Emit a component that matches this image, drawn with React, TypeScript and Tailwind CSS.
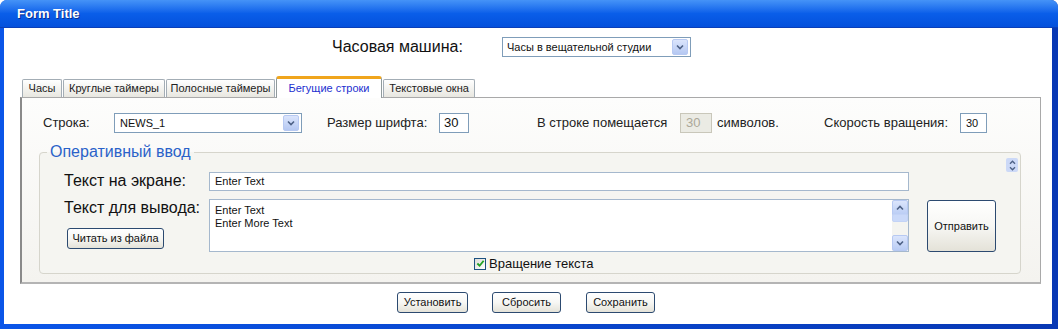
import React from 'react';

const Chevron: React.FC<{ up?: boolean; className?: string }> = ({ up, className }) => (
  <svg viewBox="0 0 8 6" className={className} fill="none">
    <path d={up ? 'M1 4.5 L4 1.5 L7 4.5' : 'M1 1.5 L4 4.5 L7 1.5'} stroke="#4d6185" strokeWidth="1.6" />
  </svg>
);

const DropButton: React.FC = () => (
  <div className="w-[16px] h-[16px] rounded-[2px] border border-[#b7c9f2] bg-gradient-to-b from-[#dbe5fc] to-[#b5c8f2] flex items-center justify-center">
    <Chevron className="w-[8px] h-[6px]" />
  </div>
);

const XpButton: React.FC<{ label: string; className?: string }> = ({ label, className }) => (
  <div
    className={`border border-[#2c4a70] rounded-[3px] bg-gradient-to-b from-white via-[#f7f7f4] to-[#e4e2d8] text-[11px] text-[#111] flex items-center justify-center ${className ?? ''}`}
  >
    {label}
  </div>
);

const tabs = [
  { label: 'Часы', w: 'w-[40px]' },
  { label: 'Круглые таймеры', w: 'w-[102px]' },
  { label: 'Полосные таймеры', w: 'w-[109px]' },
  { label: 'Бегущие строки', w: 'w-[106px]', active: true },
  { label: 'Текстовые окна', w: 'w-[92px]' },
];

export default function App() {
  return (
    <div className="w-[1058px] h-[329px] flex flex-col rounded-t-[7px] bg-gradient-to-r from-[#0a55e8] to-[#0838b4] font-['Liberation_Sans',Arial,sans-serif]">
      {/* Title bar */}
      <div className="h-[28px] shrink-0 rounded-t-[7px] bg-gradient-to-b from-[#4593f7] via-[#0a5ee9] to-[#0450dc] border-b border-[#0a3fb8] flex items-center px-[17px]">
        <span className="text-white font-bold text-[13px] [text-shadow:1px_1px_0_#0a2f90]">Form Title</span>
      </div>

      <div className="flex-1 ml-[4px] mr-[6px] mb-[5px] bg-white flex flex-col">
        {/* Clock machine row */}
        <div className="flex items-center pl-[328px] mt-[9px] h-[20px]">
          <span className="w-[170px] text-[16px] text-[#111]">Часовая машина:</span>
          <div className="w-[189px] h-[20px] border border-[#7f9db9] bg-white flex items-center justify-between pl-[4px] pr-[2px]">
            <span className="text-[11px] text-[#111]">Часы в вещательной студии</span>
            <DropButton />
          </div>
        </div>

        {/* Tabs */}
        <div className="flex items-end gap-[1px] ml-[18px] mt-[19px] h-[21px] relative z-10">
          {tabs.map((t) =>
            t.active ? (
              <div
                key={t.label}
                className={`${t.w} h-[22px] -mb-[1px] bg-white border-x border-[#919b9c] border-t-[3px] border-t-[#f0a51c] rounded-t-[3px] flex items-center justify-center text-[11px] text-[#2330d0]`}
              >
                {t.label}
              </div>
            ) : (
              <div
                key={t.label}
                className={`${t.w} h-[18px] bg-gradient-to-b from-white to-[#e8e7e0] border border-b-0 border-[#a3adb5] rounded-t-[2px] flex items-center justify-center text-[11px] text-[#222]`}
              >
                {t.label}
              </div>
            )
          )}
        </div>

        {/* Panel */}
        <div className="relative ml-[16px] w-[1021px] h-[187px] border border-[#a9a9a9] border-l-[2px] border-l-[#8a8a8a] border-b-[2px] border-b-[#b4b4b4] bg-gradient-to-b from-[#fdfdfc] to-[#f4f3ef]">
          {/* Row 1 */}
          <div className="flex items-center mt-[15px] pl-[21px] h-[20px] text-[13px] text-[#222]">
            <span className="w-[71px]">Строка:</span>
            <div className="w-[188px] h-[20px] border border-[#7f9db9] bg-white flex items-center justify-between pl-[5px] pr-[2px]">
              <span className="text-[11px] text-[#111]">NEWS_1</span>
              <DropButton />
            </div>
            <span className="ml-[25px] w-[112px]">Размер шрифта:</span>
            <div className="w-[30px] h-[20px] border border-[#7f9db9] bg-white flex items-center pl-[4px] text-[13px] text-[#111]">30</div>
            <span className="ml-[68px] w-[143px]">В строке помещается</span>
            <div className="w-[32px] h-[20px] border border-[#c9c7ba] bg-[#ebebe4] flex items-center pl-[5px] text-[13px] text-[#aca899]">30</div>
            <span className="ml-[5px] w-[107px]">символов.</span>
            <span className="w-[136px]">Скорость вращения:</span>
            <div className="w-[27px] h-[20px] border border-[#7f9db9] bg-white flex items-center pl-[5px] text-[11px] text-[#111]">30</div>
          </div>

          {/* Scroll toggle */}
          <div className="absolute right-[22px] top-[60px] w-[12px] h-[14px] rounded-[2px] bg-[#ccd9f7] flex flex-col items-center justify-center gap-[1px]">
            <Chevron up className="w-[7px] h-[5px]" />
            <Chevron className="w-[7px] h-[5px]" />
          </div>

          {/* Fieldset */}
          <fieldset className="ml-[17px] mt-[10px] w-[982px] border border-[#d6d5cc] rounded-[4px] bg-[#f5f5f1] pb-[3px]">
            <legend className="ml-[7px] px-[3px] text-[16px] leading-[18px] text-[#2a62c9]">Оперативный ввод</legend>

            <div className="flex items-center pl-[24px] mt-[8px]">
              <span className="w-[145px] text-[16px] text-[#111]">Текст на экране:</span>
              <div className="w-[700px] h-[19px] border border-[#a5b8cd] bg-white flex items-center pl-[5px] text-[11px] text-[#111]">
                Enter Text
              </div>
            </div>

            <div className="flex items-start pl-[24px] mt-[6px]">
              <div className="w-[145px] h-[53px] flex flex-col">
                <span className="text-[16px] leading-[20px] text-[#111] -mt-[1px]">Текст для вывода:</span>
                <XpButton label="Читать из файла" className="ml-[3px] mt-[10px] w-[97px] h-[21px]" />
              </div>
              <div className="w-[700px] h-[53px] border border-[#a5b8cd] bg-white flex">
                <div className="flex-1 pl-[5px] pt-[4px] text-[11px] leading-[13px] text-[#111]">
                  <div>Enter Text</div>
                  <div>Enter More Text</div>
                </div>
                <div className="w-[16px] bg-[#f4f4f0] flex flex-col justify-between">
                  <div className="h-[16px] rounded-[2px] border border-[#b7c9f2] bg-gradient-to-b from-[#dbe5fc] to-[#b9ccf4] flex items-center justify-center">
                    <Chevron up className="w-[8px] h-[6px]" />
                  </div>
                  <div className="h-[8px] -mt-[2px] rounded-[2px] border border-[#c3d3f6] bg-[#cad9f9]" />
                  <div className="flex-1" />
                  <div className="h-[16px] rounded-[2px] border border-[#b7c9f2] bg-gradient-to-b from-[#dbe5fc] to-[#b9ccf4] flex items-center justify-center">
                    <Chevron className="w-[8px] h-[6px]" />
                  </div>
                </div>
              </div>
              <XpButton label="Отправить" className="ml-[18px] mt-[1px] w-[69px] h-[52px]" />
            </div>

            <div className="flex items-center pl-[434px] mt-[5px] h-[13px]">
              <div className="w-[12px] h-[12px] border border-[#1c5180] bg-gradient-to-br from-[#dcdcd7] to-white flex items-center justify-center">
                <svg viewBox="0 0 10 10" className="w-[9px] h-[9px]" fill="none">
                  <path d="M1.5 5 L4 7.5 L8.5 2" stroke="#21a121" strokeWidth="2" />
                </svg>
              </div>
              <span className="ml-[3px] text-[13px] text-[#111]">Вращение текста</span>
            </div>
          </fieldset>
        </div>

        {/* Bottom buttons */}
        <div className="flex items-center mt-[8px] pl-[393px]">
          <XpButton label="Установить" className="w-[71px] h-[21px]" />
          <XpButton label="Сбросить" className="ml-[24px] w-[69px] h-[21px]" />
          <XpButton label="Сохранить" className="ml-[25px] w-[69px] h-[21px]" />
        </div>
      </div>
    </div>
  );
}
